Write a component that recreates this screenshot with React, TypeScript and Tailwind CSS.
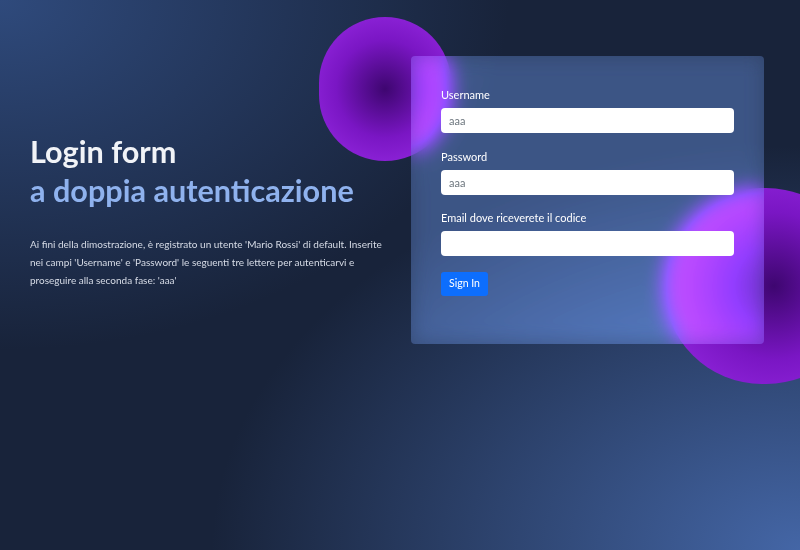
export default function App() {
  return (
    <div
      className="relative h-[550px] w-full overflow-hidden bg-[#18233a] bg-[radial-gradient(ellipse_at_0%_0%,#2f4a7c_0%,rgba(24,35,58,0)_45%),radial-gradient(ellipse_at_100%_100%,#4466a6_0%,rgba(24,35,58,0)_52%)]"
      style={{ fontFamily: 'Lato, "Noto Sans", sans-serif' }}
    >
      {/* decorative blobs behind the card */}
      <div className="pointer-events-none absolute left-[319px] top-[17px] h-[144px] w-[132px] rounded-full bg-[radial-gradient(circle_at_50%_50%,#3e0670_0%,#7a16c4_50%,#9a2ce6_100%)]" />
      <div className="pointer-events-none absolute left-[664px] top-[188px] h-[196px] w-[200px] rounded-full bg-[radial-gradient(circle_at_55%_50%,#3e0670_0%,#7a16c4_50%,#9a2ce6_100%)]" />

      <div className="relative flex items-center gap-[25px] pt-[56px]">
        <div className="w-[386px] shrink-0 pl-[30px] pt-[20px]">
          <h1 className="text-[30.6px] font-bold leading-[39px] text-[#f1f3f7]">
            Login form
            <br />
            <span className="text-[#8fb2ee]">a doppia autenticazione</span>
          </h1>
          <p className="mt-[25px] text-[10px] leading-[18px] text-[#d6dbe6]">
            Ai fini della dimostrazione, è registrato un utente 'Mario Rossi' di default. Inserite nei campi
            'Username' e 'Password' le seguenti tre lettere per autenticarvi e proseguire alla seconda fase: 'aaa'
          </p>
        </div>

        <form className="h-[288px] w-[353px] shrink-0 rounded-[4px] bg-[rgba(129,172,254,0.25)] px-[30px] pt-[32px] backdrop-blur-[10px] backdrop-brightness-[1.6]">
          <label className="block text-[11px] leading-[14px] text-white">Username</label>
          <input
            className="mt-[6px] block h-[25px] w-full rounded-[4px] bg-white px-[8px] text-[11px] text-[#333] outline-none placeholder:text-[#6c757d]"
            placeholder="aaa"
          />
          <label className="mt-[17px] block text-[11px] leading-[14px] text-white">Password</label>
          <input
            type="password"
            className="mt-[6px] block h-[25px] w-full rounded-[4px] bg-white px-[8px] text-[11px] text-[#333] outline-none placeholder:text-[#6c757d]"
            placeholder="aaa"
          />
          <label className="mt-[16px] block text-[11px] leading-[14px] text-white">
            Email dove riceverete il codice
          </label>
          <input className="mt-[6px] block h-[25px] w-full rounded-[4px] bg-white px-[8px] text-[11px] text-[#333] outline-none" />
          <button
            type="button"
            className="mt-[16px] h-[24px] rounded-[3px] bg-[#0d6efd] px-[8px] text-[10.5px] text-white"
          >
            Sign In
          </button>
        </form>
      </div>
    </div>
  );
}
